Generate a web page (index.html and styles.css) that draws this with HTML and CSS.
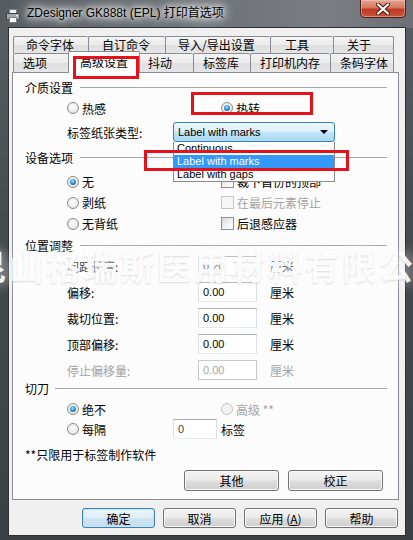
FILE: index.html
```html
<!DOCTYPE html>
<html>
<head>
<meta charset="utf-8">
<link rel="stylesheet" href="styles.css">
</head>
<body>
<div class="window">
  <div class="titlebar">
    <svg class="app-icon" width="16" height="16" viewBox="0 0 16 16">
      <rect x="4.5" y="1.5" width="7" height="4" fill="#f4f4f4" stroke="#7b8086"/>
      <rect x="1.5" y="5.5" width="13" height="6" rx="1" fill="#a4a9ae" stroke="#3d4247"/>
      <rect x="4.5" y="9.5" width="7" height="5" fill="#ffffff" stroke="#7b8086"/>
      <rect x="11" y="7" width="2" height="1.5" fill="#e8e8e8"/>
    </svg>
    <span class="title">ZDesigner GK888t (EPL) 打印首选项</span>
    <div class="close">
      <svg width="14" height="12" viewBox="0 0 14 12">
        <path d="M2 1.5 L12 10.5 M12 1.5 L2 10.5" stroke="#4a1a12" stroke-width="4.2" stroke-linecap="round"/>
        <path d="M2 1.5 L12 10.5 M12 1.5 L2 10.5" stroke="#ffffff" stroke-width="2.2" stroke-linecap="round"/>
      </svg>
    </div>
  </div>

  <div class="client">
    <div class="tabs">
      <div class="tabrow row1">
        <div class="tab">命令字体</div>
        <div class="tab">自订命令</div>
        <div class="tab">导入/导出设置</div>
        <div class="tab">工具</div>
        <div class="tab">关于</div>
      </div>
      <div class="tabrow row2">
        <div class="tab">选项</div>
        <div class="tab active">高级设置</div>
        <div class="tab">抖动</div>
        <div class="tab">标签库</div>
        <div class="tab">打印机内存</div>
        <div class="tab">条码字体</div>
      </div>
    </div>

    <div class="panel">
      <div class="group-h g-first"><span>介质设置</span></div>
      <div class="row r-media">
        <label class="opt col1"><i class="radio"></i>热感</label>
        <label class="opt"><i class="radio on"></i>热转</label>
      </div>
      <div class="row r-type">
        <span class="lbl type-lbl">标签纸张类型:</span>
        <div class="combo">
          <span class="latin">Label with marks</span>
          <i class="arrow"></i>
          <ul class="droplist latin">
            <li>Continuous</li>
            <li class="sel">Label with marks</li>
            <li>Label with gaps</li>
          </ul>
        </div>
      </div>

      <div class="group-h g-dev"><span>设备选项</span></div>
      <div class="dev-rows">
        <div class="row r21">
          <label class="opt col1"><i class="radio on"></i>无</label>
          <label class="opt"><i class="check"></i>裁下首份的顶部</label>
        </div>
        <div class="row r21">
          <label class="opt col1"><i class="radio"></i>剥纸</label>
          <label class="opt disabled"><i class="check"></i>在最后元素停止</label>
        </div>
        <div class="row r21">
          <label class="opt col1"><i class="radio"></i>无背纸</label>
          <label class="opt"><i class="check"></i>后退感应器</label>
        </div>
      </div>

      <div class="group-h g-pos"><span>位置调整</span></div>
      <div class="pos-rows">
        <div class="row">
          <span class="lbl pos-lbl">间距长度:</span>
          <span class="field latin">0.20</span>
          <span class="unit">厘米</span>
        </div>
        <div class="row">
          <span class="lbl pos-lbl">偏移:</span>
          <span class="field latin">0.00</span>
          <span class="unit">厘米</span>
        </div>
        <div class="row">
          <span class="lbl pos-lbl">裁切位置:</span>
          <span class="field latin">0.00</span>
          <span class="unit">厘米</span>
        </div>
        <div class="row">
          <span class="lbl pos-lbl">顶部偏移:</span>
          <span class="field latin">0.00</span>
          <span class="unit">厘米</span>
        </div>
        <div class="row disabled">
          <span class="lbl pos-lbl">停止偏移量:</span>
          <span class="field latin">0.00</span>
          <span class="unit">厘米</span>
        </div>
      </div>

      <div class="group-h g-cut"><span>切刀</span></div>
      <div class="row r-never">
        <label class="opt col1"><i class="radio on"></i>绝不</label>
        <label class="opt disabled"><i class="radio"></i>高级 **</label>
      </div>
      <div class="row">
        <label class="opt cut-col"><i class="radio"></i>每隔</label>
        <span class="field small latin">0</span>
        <span class="unit-tight">标签</span>
      </div>

      <div class="note">**只限用于标签制作软件</div>

      <div class="panel-buttons">
        <div class="btn wide">其他</div>
        <div class="btn wide">校正</div>
      </div>
    </div>

    <div class="dlg-buttons">
      <div class="btn dlg default">确定</div>
      <div class="btn dlg">取消</div>
      <div class="btn dlg">应用 (<u>A</u>)</div>
      <div class="btn dlg">帮助</div>
    </div>
  </div>

  <div class="watermark">昆山格瑞斯医用材料有限公司</div>

  <div class="mark m1"></div>
  <div class="mark m2"></div>
  <div class="mark m3"></div>
</div>
</body>
</html>
```

FILE: styles.css
```css
* { box-sizing: border-box; }

html, body {
  margin: 0;
  padding: 0;
  width: 413px;
  height: 540px;
  overflow: hidden;
  background: #3c4146;
}

body {
  font-family: "Liberation Sans", "Noto Sans CJK SC", sans-serif;
  font-size: 12px;
  color: #000;
}

.window {
  position: relative;
  width: 413px;
  height: 540px;
  background: linear-gradient(to bottom, #5b6066 0%, #464b50 40%, #3b4045 100%);
  overflow: hidden;
}

/* ---------- title bar ---------- */
.titlebar {
  height: 28px;
  display: flex;
  align-items: flex-start;
  padding-left: 5px;
  background: linear-gradient(to right, #575c61 0%, #6b7074 45%, #7a7e82 80%, #6c7075 100%);
}

.app-icon {
  margin-top: 8px;
  flex: none;
}

.title {
  margin-left: 6px;
  line-height: 27px;
  font-size: 12px;
  font-family: "Liberation Sans", "Noto Sans CJK SC", sans-serif;
  color: #000;
  text-shadow: 0 0 5px #fff, 0 0 9px #fff, 0 0 13px rgba(255,255,255,0.9), 0 0 16px rgba(255,255,255,0.8);
}

.close {
  margin-left: auto;
  margin-right: 7px;
  width: 46px;
  height: 18px;
  border: 1px solid #4a1e16;
  border-top: none;
  border-radius: 0 0 5px 5px;
  background: linear-gradient(to bottom, #e3a393 0%, #d47a64 45%, #c2391f 55%, #c8543a 100%);
  box-shadow: inset 0 0 0 1px rgba(255,210,200,0.45);
  display: flex;
  align-items: center;
  justify-content: center;
}

/* ---------- client ---------- */
.client {
  margin-left: 9px;
  width: 396px;
  height: 507px;
  background: #f0f0f0;
  padding: 8px 6px 0 3px;
  box-shadow: 0 0 0 1px #2c3034;
}

.tabs {
  padding-left: 1px;
}

.tabrow {
  display: flex;
  width: 381px;
}

.row1 { height: 17px; }
.row2 { height: 19px; }

.tab {
  flex: none;
  border: 1px solid #898c95;
  border-right: none;
  border-bottom: none;
  border-radius: 2px 2px 0 0;
  background: linear-gradient(to bottom, #f3f3f3 0%, #ebebeb 50%, #dfdfdf 51%, #e5e5e5 100%);
  white-space: nowrap;
  font-family: "Noto Sans CJK SC", sans-serif;
}

.tab:last-child { border-right: 1px solid #898c95; }

.row1 .tab { line-height: 16px; padding-left: 12px; }
.row1 .tab:nth-child(1) { width: 75px; }
.row1 .tab:nth-child(2) { width: 77px; padding-left: 13px; }
.row1 .tab:nth-child(3) { width: 105px; }
.row1 .tab:nth-child(4) { width: 63px; padding-left: 14px; }
.row1 .tab:nth-child(5) { width: 61px; padding-left: 13px; }

.row2 .tab { line-height: 18px; padding-left: 9px; }
.row2 .tab:nth-child(1) { width: 57px; }
.row2 .tab:nth-child(3) { width: 55px; }
.row2 .tab:nth-child(4) { width: 57px; }
.row2 .tab:nth-child(5) { width: 80px; }
.row2 .tab:nth-child(6) { width: 64px; }

.row2 .tab.active {
  position: relative;
  z-index: 2;
  width: 72px;
  height: 22px;
  margin: -2px -2px 0 -2px;
  padding-left: 11px;
  line-height: 20px;
  background: #ffffff;
  border-right: 1px solid #898c95;
}

.panel {
  height: 428px;
  border: 1px solid #898c95;
  background: #fcfcfc;
  font-family: "Noto Sans CJK SC", sans-serif;
}

/* ---------- group headers ---------- */
.group-h {
  display: flex;
  align-items: center;
  height: 16px;
  margin: 0 11px 0 12px;
}

.group-h::after {
  content: "";
  flex: 1;
  height: 0;
  border-top: 1px solid #a8a8a8;
  margin-left: 7px;
}

.g-first { margin-top: 6px; }
.g-dev { margin-top: 7px; }
.g-pos { margin-top: 3px; }
.g-cut { margin-top: 0; }
.g-cut::after { margin-left: 6px; }

/* ---------- rows ---------- */
.row {
  display: flex;
  align-items: center;
  height: 20px;
  padding-left: 54px;
  white-space: nowrap;
}

.r-media { margin-top: 3px; }
.r-type { margin-top: 4px; position: relative; z-index: 3; }

.dev-rows { margin-top: 6px; }
.r21 { height: 21px; }

.pos-rows {
  margin-top: 3px;
  display: flex;
  flex-direction: column;
  gap: 6px;
}

.r-never { margin-top: 3px; }

.col1 { width: 154px; }
.cut-col { width: 106px; }

.opt {
  display: flex;
  align-items: center;
}

.disabled { color: #a3a3a3; }

.radio {
  position: relative;
  flex: none;
  width: 12px;
  height: 12px;
  margin-right: 3px;
  border-radius: 50%;
  border: 1px solid #8b8b8b;
  background: radial-gradient(circle at 50% 40%, #fdfdfd 0%, #ececec 60%, #d2d2d2 100%);
}

.radio.on::after {
  content: "";
  position: absolute;
  left: 2px;
  top: 2px;
  width: 6px;
  height: 6px;
  border-radius: 50%;
  background: radial-gradient(circle at 45% 35%, #a8e4ff 0%, #3a95d8 45%, #0d3f78 100%);
}

.disabled .radio {
  border-color: #c4c4c4;
  background: #f3f3f3;
}

.check {
  flex: none;
  width: 13px;
  height: 13px;
  margin-right: 3px;
  border: 1px solid #8e8f8f;
  background: linear-gradient(135deg, #d8d8d8 0%, #f4f4f4 60%, #ffffff 100%);
}

.disabled .check {
  border-color: #c6c6c6;
  background: #f6f6f6;
}

.type-lbl { width: 106px; }
.pos-lbl { width: 131px; }

.latin {
  font-family: "Liberation Sans", sans-serif;
  font-size: 11px;
}

/* combo box */
.combo {
  position: relative;
  width: 162px;
  height: 20px;
  border: 1px solid #3c7fb1;
  border-radius: 3px;
  background: linear-gradient(to bottom, #edf7fd 0%, #dcf0fb 48%, #c1e4f8 52%, #a9d8f2 100%);
  display: flex;
  align-items: center;
  padding-left: 4px;
}

.arrow {
  margin-left: auto;
  margin-right: 6px;
  width: 0;
  height: 0;
  border-left: 4px solid transparent;
  border-right: 4px solid transparent;
  border-top: 4px solid #000;
}

.droplist {
  position: absolute;
  left: -1px;
  top: 19px;
  width: 162px;
  margin: 0;
  padding: 0;
  list-style: none;
  background: #fff;
  border: 1px solid #8a8a8a;
  border-top: none;
}

.droplist li {
  height: 13px;
  line-height: 13px;
  padding-left: 3px;
}

.droplist li.sel {
  background: #3399ff;
  color: #fff;
}

/* fields */
.field {
  width: 59px;
  height: 20px;
  line-height: 18px;
  padding-left: 4px;
  border: 1px solid #abadb3;
  border-left-color: #dbdfe6;
  border-right-color: #dbdfe6;
  border-bottom-color: #e3e9ef;
  background: #fff;
  color: #000;
}

.disabled .field {
  color: #a3a3a3;
  border-color: #c7c9cc;
}

.field.small { width: 44px; color: #444; }

.unit { margin-left: 13px; }
.unit-tight { margin-left: 4px; }

.note {
  margin: 8px 0 0 12px;
  height: 16px;
  line-height: 16px;
}

/* buttons */
.btn {
  display: flex;
  align-items: center;
  justify-content: center;
  border: 1px solid #707070;
  border-radius: 3px;
  background: linear-gradient(to bottom, #f2f2f2 0%, #ebebeb 49%, #dddddd 51%, #cfcfcf 100%);
  box-shadow: inset 0 0 0 1px #fafafa;
  font-family: "Noto Sans CJK SC", sans-serif;
  white-space: pre;
}

.btn u { text-decoration: underline; }

.panel-buttons {
  display: flex;
  justify-content: flex-end;
  gap: 9px;
  margin-top: 7px;
  padding-right: 15px;
}

.btn.wide { width: 95px; height: 21px; }

.dlg-buttons {
  display: flex;
  justify-content: flex-end;
  gap: 8px;
  margin-top: 8px;
  padding-right: 1px;
}

.btn.dlg { width: 73px; height: 20px; }

.btn.default {
  border-color: #3c7fb1;
  background: linear-gradient(to bottom, #eaf4fa 0%, #dfeef7 49%, #cfe3f0 51%, #c6dded 100%);
  box-shadow: inset 0 0 0 1px #bfe6fb;
}

/* watermark overlay */
.watermark {
  position: absolute;
  left: -28px;
  top: 249px;
  white-space: nowrap;
  font-family: "Noto Sans CJK SC", sans-serif;
  font-weight: 700;
  font-size: 34px;
  line-height: 34px;
  letter-spacing: 3px;
  color: rgba(255, 255, 255, 0.93);
  text-shadow: 0 1px 2px rgba(0,0,0,0.14), 0 0 12px rgba(255,255,255,0.85);
  pointer-events: none;
  z-index: 10;
}

/* red annotation boxes */
.mark {
  position: absolute;
  border: 3px solid #e5121c;
  z-index: 11;
}

.m1 { left: 73px; top: 56px; width: 66px; height: 23px; }
.m2 { left: 191px; top: 92px; width: 122px; height: 23px; }
.m3 { left: 144px; top: 150px; width: 205px; height: 21px; }
```
